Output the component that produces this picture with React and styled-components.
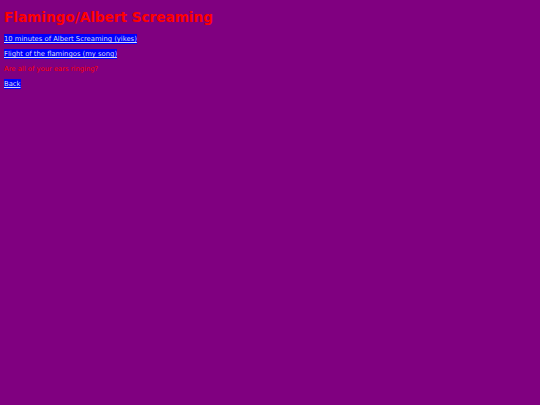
import React from "react";
import styled, { createGlobalStyle } from "styled-components";

const Global = createGlobalStyle`
  html, body { background: #800080; }
  body {
    margin: 4px;
    font-family: "DejaVu Sans", Verdana, sans-serif;
    font-size: 6.8px;
    color: #ff0000;
  }
`;

const Title = styled.h1`
  margin: 5px 0 10px;
  font-size: 13.6px;
  font-weight: bold;
  color: #ff0000;
`;

const Para = styled.p`
  margin: 7px 0;
  font-size: 6.8px;
  line-height: 8px;
`;

const Link = styled.a`
  color: #dcdcf0;
  background: #0000ff;
  text-decoration: underline;
  padding: 1px 0;
`;

export default function App() {
  return (
    <>
      <Global />
      <Title>Flamingo/Albert Screaming</Title>
      <Para><Link href="#">10 minutes of Albert Screaming (yikes)</Link></Para>
      <Para><Link href="#">Flight of the flamingos (my song)</Link></Para>
      <Para>Are all of your ears ringing?</Para>
      <Para><Link href="#">Back</Link></Para>
    </>
  );
}
